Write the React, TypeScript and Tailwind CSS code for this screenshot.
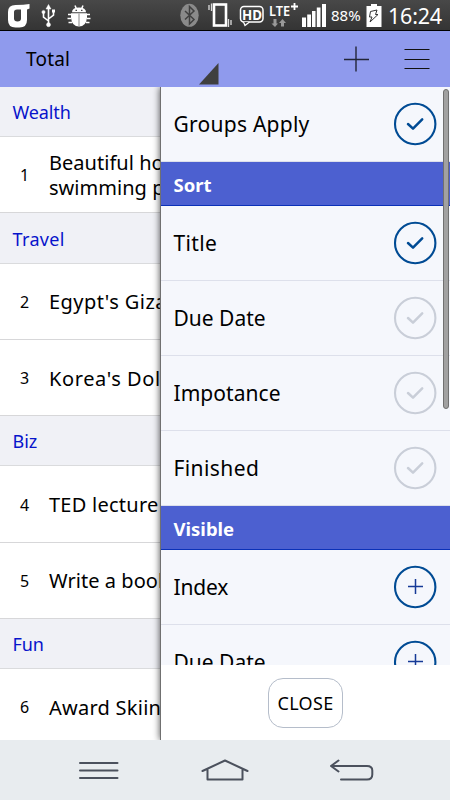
import React from 'react';

type ListRow = {
  kind: 'group' | 'goal';
  text: string;
  no?: number;
  spacing: string;
};

type OptionRow = {
  kind: 'section' | 'check' | 'plus';
  text: string;
  active?: boolean;
  spacing: string;
};

const listRows: ListRow[] = [
  { kind: 'group', text: 'Wealth', spacing: 'tracking-[-0.1px]' },
  { kind: 'goal', no: 1, text: 'Beautiful house with\nswimming pool', spacing: 'tracking-[0.03px]' },
  { kind: 'group', text: 'Travel', spacing: 'tracking-[0.35px]' },
  { kind: 'goal', no: 2, text: "Egypt's Giza Pyramid", spacing: 'tracking-[0.45px]' },
  { kind: 'goal', no: 3, text: "Korea's Dolmen", spacing: 'tracking-[0.6px]' },
  { kind: 'group', text: 'Biz', spacing: 'tracking-[0px]' },
  { kind: 'goal', no: 4, text: 'TED lecture', spacing: 'tracking-[0.25px]' },
  { kind: 'goal', no: 5, text: 'Write a book', spacing: 'tracking-[0.05px]' },
  { kind: 'group', text: 'Fun', spacing: 'tracking-[-0.1px]' },
  { kind: 'goal', no: 6, text: 'Award Skiing', spacing: 'tracking-[0.25px]' },
];

const optionRows: OptionRow[] = [
  { kind: 'check', text: 'Groups Apply', active: true, spacing: 'tracking-[0.25px]' },
  { kind: 'section', text: 'Sort', spacing: 'tracking-[0px]' },
  { kind: 'check', text: 'Title', active: true, spacing: 'tracking-[0.35px]' },
  { kind: 'check', text: 'Due Date', spacing: 'tracking-[0px]' },
  { kind: 'check', text: 'Impotance', spacing: 'tracking-[0.05px]' },
  { kind: 'check', text: 'Finished', spacing: 'tracking-[0.4px]' },
  { kind: 'section', text: 'Visible', spacing: 'tracking-[0px]' },
  { kind: 'plus', text: 'Index', active: true, spacing: 'tracking-[-0.2px]' },
  { kind: 'plus', text: 'Due Date', active: true, spacing: 'tracking-[0px]' },
];

const StatusBar: React.FC = () => (
  <div className="h-[31px] shrink-0 flex items-center bg-linear-to-b from-[#484848] to-[#343434] border-b border-black text-white">
    {/* Notifications */}
    <svg width="180" height="30" viewBox="0 0 180 30" className="shrink-0">
      <path
        d="M29.500 4V8.500L27 9.500V20Q27 27.500 19.500 27.500H15.500Q8 27.500 8 20V12Q8 5 15.500 5Q24 5 29.500 4ZM14 12V18.500Q14 21.500 17.500 21.500Q21 21.500 21 18.500V9.500H17Q14 9.500 14 12Z"
        fill="#fff"
        fillRule="evenodd"
      />
      <g stroke="#fff" strokeWidth="1.600" fill="none">
        <path d="M48.500 8V24M48.500 21L43.500 17V12M48.500 19L53.500 15V11" />
        <path d="M46 9L48.500 4.500L51 9Z" fill="#fff" strokeWidth="0.500" />
        <circle cx="43.500" cy="12" r="1.600" fill="#fff" strokeWidth="0.500" />
        <path d="M52 9.500H55V12.500H52Z" fill="#fff" strokeWidth="0" />
        <circle cx="48.500" cy="24.700" r="2" fill="#fff" strokeWidth="0.500" />
      </g>
      <g stroke="#fff" fill="#fff">
        <path d="M72 12.300Q72 7.500 79 7.500Q86 7.500 86 12.300Z" strokeWidth="0" />
        <path d="M75 5.500L76.500 9M83 5.500L81.500 9" strokeWidth="1.500" />
        <path d="M71 13.300H87V18Q86 26.500 79 26.500Q72 26.500 71 18Z" strokeWidth="0" />
        <path d="M68 14.500H71M67.500 18.500H71M68.500 22.500H72M87 14.500H90M87 18.500H90.500M86 22.500H89.500" strokeWidth="1.600" />
        <path d="M79 13.500V26" stroke="#888" strokeWidth="1" />
        <path d="M75.500 10.300H77M81 10.300H82.500" stroke="#444" strokeWidth="1.200" />
      </g>
    </svg>
    {/* Radio indicators */}
    <svg width="150" height="30" viewBox="180 0 150 30" className="shrink-0">
      <ellipse cx="189.500" cy="15.300" rx="9.200" ry="11.500" fill="#8a8a8a" />
      <path d="M185 11L194 19.500L189.500 24V6.500L194 11L185 19.500" fill="none" stroke="#404040" strokeWidth="1.500" />
      <rect x="214" y="4.500" width="12" height="21" fill="none" stroke="#fff" strokeWidth="2.600" />
      <path d="M209 5V10M211.500 3.500V11M228.500 19V27M231 20V25" stroke="#ddd" strokeWidth="1.300" />
      <rect x="240.500" y="6.500" width="22.500" height="15.500" rx="3.500" fill="none" stroke="#fff" strokeWidth="1.500" />
      <path d="M243.500 22L245 25.500L249.500 22" fill="#444" stroke="#fff" strokeWidth="1.300" />
      <text x="242" y="19.500" fill="#fff" fontSize="14" fontWeight="700" fontFamily="Noto Sans, sans-serif" textLength="20" lengthAdjust="spacingAndGlyphs">HD</text>
      <text x="269" y="15.500" fill="#fff" fontSize="13.500" fontWeight="600" fontFamily="Noto Sans, sans-serif" textLength="21" lengthAdjust="spacingAndGlyphs">LTE</text>
      <path d="M291 6.500H298M294.500 3V10" stroke="#fff" strokeWidth="1.800" />
      <path d="M273.500 19V23.500H271.500L275 27L278 23.500H276.500V19ZM281 26.500V23H279L282.500 19L286 23H284V26.500Z" fill="#999" />
      <path d="M302 17.500H306V27H302ZM307.200 14.500H311V27H307.200ZM312 11H315.500V27H312ZM316.800 7.500H320.500V27H316.800ZM322 4H326V27H322Z" fill="#fff" />
    </svg>
    <span className="w-[35px] pl-[1px] pt-[1px] text-[15px] leading-none whitespace-nowrap">88%</span>
    <svg width="20" height="30" viewBox="365 0 20 30" className="shrink-0">
      <path d="M366.500 6H371V4H377V6H381.500V27H366.500Z" fill="#fff" />
      <path d="M370.500 11.500L377 10L375.500 14.500H378L370 22L372 17H369.500Z" fill="#fff" stroke="#333" strokeWidth="1" />
    </svg>
    <span className="ml-[3px] pt-[2px] text-[21.500px] leading-none tracking-[-0.2px] whitespace-nowrap">16:24</span>
  </div>
);

const AppHeader: React.FC = () => (
  <header className="h-14 shrink-0 flex bg-[#8f9aed] text-black">
    <h1 className="w-[199px] pl-[26px] pt-[14px] text-[19px] leading-7 tracking-[0.2px]">Total</h1>
    <svg width="20" height="56" viewBox="199 31 20 56">
      <path d="M199 84.500L218.500 63V84.500Z" fill="#3f3f3f" />
    </svg>
    <svg width="86" height="56" viewBox="344 31 86 56" className="ml-[125px]">
      <path d="M343.500 59.500H369M356 46.500V71.500" stroke="#222638" strokeWidth="1.400" />
      <path d="M404.500 49.500H429.500M404.500 59.500H429.500M404.500 68.500H429.500" stroke="#111" strokeWidth="1.200" />
    </svg>
  </header>
);

const RoundIcon: React.FC<{ kind: 'check' | 'plus'; active?: boolean }> = ({ kind, active }) => (
  <svg width="44" height="44" viewBox="0 0 44 44" fill="none" stroke={active ? '#004b94' : '#c9ced8'}>
    <circle cx="22.200" cy="22" r="20.200" strokeWidth="2.100" />
    {kind === 'check' ? (
      <path d="M15 22L20 26.600L29.200 17.300" strokeWidth="2.500" strokeLinecap="round" strokeLinejoin="round" />
    ) : (
      <path d="M15 21.500H30M22.500 14V29" strokeWidth="1.500" stroke="#163a96" />
    )}
  </svg>
);

const GoalList: React.FC = () => (
  <div className="w-[160px] shrink-0 h-full overflow-hidden bg-white">
    {listRows.map((row) =>
      row.kind === 'group' ? (
        <div
          key={row.text}
          className="h-[50.400px] flex items-center pl-[12.500px] pt-[2px] bg-[#f0f1f6] border-b border-[#dadbdd] text-[18px] text-[#0714cb]"
        >
          <span className={row.spacing}>{row.text}</span>
        </div>
      ) : (
        <div key={row.text} className="h-[76.100px] flex items-center pt-[1px] border-b border-[#d7d7d9] text-black">
          <span className="w-[49px] shrink-0 text-center text-[16px]">{row.no}</span>
          <span className={`whitespace-pre text-[20px] leading-[25px] ${row.spacing}`}>{row.text}</span>
        </div>
      )
    )}
  </div>
);

const OptionsPanel: React.FC = () => (
  <div className="relative flex-1 min-w-0 h-full flex flex-col bg-white border-l border-[#707070] shadow-[0_0_7px_rgba(0,0,0,0.7)]">
    <div className="h-[578px] shrink-0 overflow-hidden bg-[#f5f7fc]">
      {optionRows.map((row, i) =>
        row.kind === 'section' ? (
          <div
            key={i}
            className="h-11 flex items-center pl-[12.500px] pt-[2px] bg-[#4c60d0] border-b border-[#0b31b8] text-[18.500px] font-bold text-white"
          >
            <span className={row.spacing}>{row.text}</span>
          </div>
        ) : (
          <div
            key={i}
            className="h-[75px] flex items-center justify-between pl-[12.500px] pr-[13px] border-b border-[#dde0eb] text-[21px] text-black"
          >
            <span className={`pt-[2px] ${row.spacing}`}>{row.text}</span>
            <RoundIcon kind={row.kind} active={row.active} />
          </div>
        )
      )}
    </div>

    {/* Close Button */}
    <div className="flex-1 flex items-center justify-center">
      <button className="w-[75px] h-[50px] pt-[1px] rounded-[15px] border-[1.500px] border-[#b5bdca] bg-white text-[18px] tracking-[0.3px] text-black">
        CLOSE
      </button>
    </div>

    {/* Scrollbar */}
    <div className="absolute right-[1px] top-[2px] w-[6px] h-[320px] rounded-full border border-[#707070] bg-[#a1a1a1]" />
  </div>
);

const NavBar: React.FC = () => (
  <nav className="h-[60px] shrink-0 bg-[#e8ecef]">
    <svg width="450" height="60" viewBox="0 740 450 60" fill="none" stroke="#4b515d" strokeWidth="2" strokeLinecap="round" strokeLinejoin="round">
      <path d="M80 763H117.500M80 770.500H117.500M80 778H117.500" />
      <path d="M202.500 771L225 760.500L247.500 771M207.500 770V779.500H242.500V770" />
      <path d="M338.500 760.500L331 766L338.500 771.500M331 766H367Q372.300 766 372.300 770.500V774.500Q372.300 779.500 367 779.500H341" />
    </svg>
  </nav>
);

const App: React.FC = () => {
  return (
    <div className="w-[450px] h-[800px] flex flex-col overflow-hidden font-['Noto_Sans','Open_Sans',sans-serif]">
      <StatusBar />
      <AppHeader />
      <main className="flex-1 min-h-0 flex overflow-hidden">
        <GoalList />
        <OptionsPanel />
      </main>
      <NavBar />
    </div>
  );
};

export default App;
